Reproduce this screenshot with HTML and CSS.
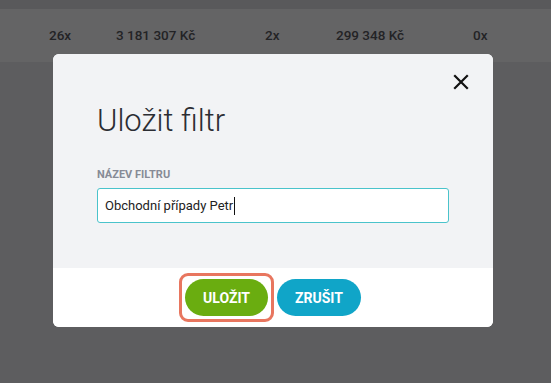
FILE: index.html
```html
<!DOCTYPE html>
<html lang="cs">
<head>
<meta charset="utf-8">
<title>Uložit filtr</title>
<link rel="stylesheet" href="styles.css">
</head>
<body>
<div class="page">
  <div class="topstrip"></div>
  <div class="statsband">
    <span class="stat">26x</span>
    <span class="stat">3 181 307 Kč</span>
    <span class="stat">2x</span>
    <span class="stat">299 348 Kč</span>
    <span class="stat">0x</span>
  </div>
</div>
<div class="modal" role="dialog" aria-labelledby="mtitle">
  <div class="modal-body">
    <div class="close-row">
      <button class="close" aria-label="Zavřít">
        <svg width="16" height="16" viewBox="0 0 16 16"><path d="M2 2 L14 14 M14 2 L2 14" stroke="#111" stroke-width="2.2" stroke-linecap="square" fill="none"/></svg>
      </button>
    </div>
    <h1 class="title" id="mtitle">Uložit filtr</h1>
    <div class="label">Název filtru</div>
    <div class="input" role="textbox">Obchodní případy Petr<span class="caret"></span></div>
  </div>
  <div class="modal-footer">
    <button class="btn btn-save focused">Uložit</button>
    <button class="btn btn-cancel">Zrušit</button>
  </div>
</div>
</body>
</html>
```
FILE: styles.css
```css
html, body {
  margin: 0;
  padding: 0;
}
body {
  background: #5d5d5f;
  font-family: Roboto, "Liberation Sans", sans-serif;
  width: 551px;
  height: 383px;
  overflow: hidden;
}
.topstrip {
  height: 9px;
  background: #59595b;
}
.statsband {
  height: 53px;
  background: #646465;
  display: grid;
  grid-template-columns: 67px 149px 71px 137px auto;
  padding-left: 49px;
  align-items: center;
  box-sizing: border-box;
}
.stat {
  font-size: 13.5px;
  font-weight: 500;
  color: #232325;
  padding-bottom: 1px;
}
.modal {
  position: absolute;
  left: 53px;
  top: 54px;
  width: 440px;
  border-radius: 6px;
  background: #fff;
}
.modal-body {
  background: #f2f3f5;
  border-radius: 6px 6px 0 0;
  padding: 20px 44px 45px;
}
.close-row {
  display: flex;
  justify-content: flex-end;
  margin-right: -20px;
}
.close {
  width: 16px;
  height: 16px;
  padding: 0;
  border: 0;
  background: none;
  display: block;
}
.close svg { display: block; }
.title {
  margin: 15px 0 0;
  font-size: 31px;
  line-height: 32px;
  font-weight: 300;
  color: #2b2d33;
}
.label {
  margin-top: 32px;
  font-size: 11px;
  line-height: 12px;
  font-weight: 700;
  color: #878b96;
  text-transform: uppercase;
}
.input {
  margin-top: 7px;
  height: 35px;
  box-sizing: border-box;
  border: 1px solid #4ac3cb;
  border-radius: 3px;
  background: #fff;
  padding: 0 7px;
  display: flex;
  align-items: center;
  font-size: 13px;
  color: #222;
}
.caret {
  display: inline-block;
  width: 1px;
  height: 18px;
  background: #111;
  margin-left: 1px;
}
.modal-footer {
  background: #fff;
  border-radius: 0 0 6px 6px;
  padding: 11px 0;
  display: flex;
  justify-content: center;
  gap: 9px;
}
.btn {
  position: relative;
  height: 37px;
  border: 0;
  border-radius: 19px;
  padding: 0 17px;
  font-family: Roboto, "Liberation Sans", sans-serif;
  font-size: 14px;
  font-weight: 700;
  color: #fff;
  text-transform: uppercase;
}
.btn-save {
  background: #6aad10;
  width: 83px;
}
.btn-cancel {
  background: #10a5c8;
  width: 84px;
}
.focused::after {
  content: "";
  position: absolute;
  left: -6px;
  right: -6px;
  top: -6px;
  bottom: -6px;
  border: 3px solid #e8765f;
  border-radius: 9px;
  box-sizing: border-box;
}
```
